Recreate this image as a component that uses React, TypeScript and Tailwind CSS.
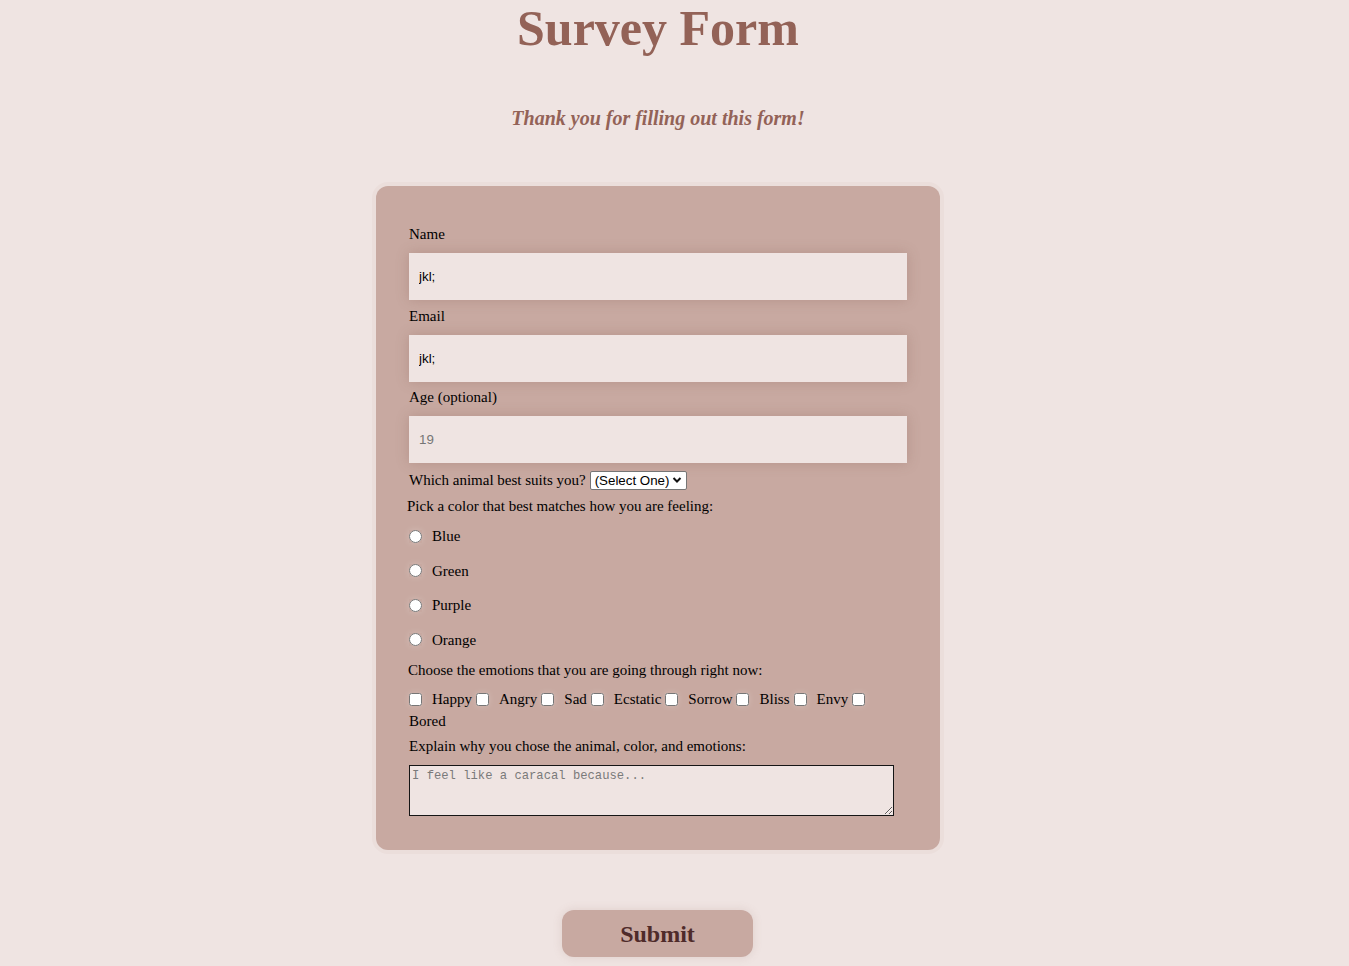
import { useState } from 'react'

const colors = ['Blue', 'Green', 'Purple', 'Orange']
const emotions = ['Happy', 'Angry', 'Sad', 'Ecstatic', 'Sorrow', 'Bliss', 'Envy', 'Bored']

const fieldClass =
    "block h-[47px] w-full bg-[#efe4e2] px-[10px] text-[13.33px] text-black outline-none shadow-[0_0_12px_rgba(130,90,80,0.28)] placeholder:text-[#757575] [font-family:'Liberation_Sans',Arial,sans-serif] placeholder:[font-family:'Liberation_Sans',Arial,sans-serif]"

export default function App() {
    const [color, setColor] = useState('')

    return (
        <div className="min-h-[966px] bg-[#efe4e2] [font-family:'Liberation_Serif','Times_New_Roman',serif]">
            <div className="flex w-[1316px] flex-col items-center">
                <h1 className="m-0 h-[56px] text-[50px] font-bold leading-[56px] text-[#936257]">Survey Form</h1>
                <p className="mt-[51px] h-[22px] text-[20px] font-bold italic leading-[22px] text-[#936257]">
                    Thank you for filling out this form!
                </p>

                <form
                    className="mt-[57px] w-[564px] rounded-[12px] bg-[#c8a9a1] px-[33px] pt-[38px] pb-[34px] text-[15px] leading-[20px] text-black shadow-[0_0_0_4px_#ebdedb]"
                    onSubmit={(e) => e.preventDefault()}
                >
                    <label htmlFor="name" className="block h-[20px]">Name</label>
                    <input id="name" type="text" defaultValue="jkl;" className={`${fieldClass} mt-[9px]`} />

                    <label htmlFor="email" className="mt-[6px] block h-[20px]">Email</label>
                    <input id="email" type="text" defaultValue="jkl;" className={`${fieldClass} mt-[9px]`} />

                    <label htmlFor="age" className="mt-[5px] block h-[20px]">Age (optional)</label>
                    <input id="age" type="text" inputMode="numeric" placeholder="19" className={`${fieldClass} mt-[9px]`} />

                    <div className="mt-[7px] flex h-[20px] items-center gap-[4px]">
                        <label htmlFor="animal">Which animal best suits you?</label>
                        <div className="flex h-[19px] w-[97px] items-center justify-between rounded-[2px] border border-[#767676] bg-white pr-[4px] pl-[4px]">
                            <select
                                id="animal"
                                className="appearance-none bg-transparent text-[13.33px] leading-[17px] text-black outline-none [font-family:'Liberation_Sans',Arial,sans-serif]"
                                defaultValue=""
                            >
                                <option value="">(Select One)</option>
                                <option value="caracal">Caracal</option>
                                <option value="otter">Otter</option>
                            </select>
                            <svg width="10" height="8" viewBox="0 0 10 8" className="shrink-0">
                                <path d="M1.5 2 L5 5.5 L8.5 2" fill="none" stroke="#111" strokeWidth="2" />
                            </svg>
                        </div>
                    </div>

                    <p className="mt-[6px] -ml-[2px] h-[20px]">Pick a color that best matches how you are feeling:</p>

                    <div className="mt-[3px]">
                        {colors.map((c) => (
                            <label key={c} className="flex h-[34.5px] items-center">
                                <input
                                    type="radio"
                                    name="color"
                                    value={c}
                                    checked={color === c}
                                    onChange={() => setColor(c)}
                                    className="m-0 mr-[10px] h-[13px] w-[13px] shadow-[0_0_6px_rgba(255,255,255,0.2)]"
                                />
                                {c}
                            </label>
                        ))}
                    </div>

                    <p className="mt-[3px] -ml-[1px] h-[20px]">Choose the emotions that you are going through right now:</p>

                    <div className="mt-[8px] flex flex-wrap items-center">
                        {emotions.map((em, i) => (
                            <label key={em} className="contents">
                                <span className="flex h-[22px] items-center">
                                    <input
                                        type="checkbox"
                                        value={em}
                                        className={`m-0 mr-[10px] h-[13px] w-[13px] shadow-[0_0_6px_rgba(255,255,255,0.2)] ${i === 0 ? '' : 'ml-[4px]'}`}
                                    />
                                </span>
                                <span className="flex h-[22px] items-center">{em}</span>
                            </label>
                        ))}
                    </div>

                    <label htmlFor="why" className="mt-[4px] block h-[20px]">
                        Explain why you chose the animal, color, and emotions:
                    </label>
                    <textarea
                        id="why"
                        placeholder="I feel like a caracal because..."
                        className="mt-[9px] block h-[51px] w-[485px] border border-[#151515] bg-[#efe4e2] px-[2px] pt-[3px] text-[12.2px] leading-[14px] outline-none placeholder:text-[#7a7a7a] [font-family:'Liberation_Mono','Courier_New',monospace]"
                    />
                </form>

                <button
                    type="submit"
                    className="mt-[60px] -ml-[1px] h-[47px] w-[191px] rounded-[12px] bg-[#c8a9a1] text-[24px] font-bold text-[#4f2b2a] shadow-[0_0_10px_rgba(150,110,100,0.18)]"
                >
                    Submit
                </button>
            </div>
        </div>
    )
}
